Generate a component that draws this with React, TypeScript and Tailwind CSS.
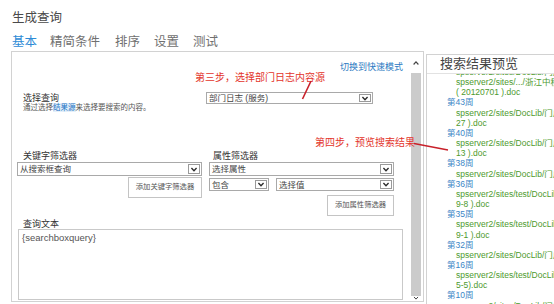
import React from "react";

const Chevron = ({ className }: { className?: string }) => (
  <svg viewBox="0 0 10 8" className={className}>
    <path d="M1.8 2.2 L5 5.6 L8.2 2.2" fill="none" stroke="#2b2b2b" strokeWidth="1.7" />
  </svg>
);

function Dropdown({ text, className }: { text: string; className: string }) {
  return (
    <div className={"flex items-stretch border border-[#a9a9a9] bg-white " + className}>
      <span className="flex-1 flex items-center pl-[2px] text-[8.5px] leading-[10px] text-[#444] whitespace-nowrap overflow-hidden">
        {text}
      </span>
      <span className="flex items-center justify-center w-[12px] my-[1px] mr-[1px] border border-[#9a9a9a]">
        <Chevron className="w-[8px] h-[7px]" />
      </span>
    </div>
  );
}

type Row = { t: string; k: "g" | "b" };

const rows: Row[] = [
  { t: "spserver2/sites/DocLib/门户部门日志", k: "g" },
  { t: "spserver2/sites/.../浙江中移动部门日志", k: "g" },
  { t: "( 20120701 ).doc", k: "g" },
  { t: "第43周", k: "b" },
  { t: "spserver2/sites/DocLib/门户部门日志", k: "g" },
  { t: "27 ).doc", k: "g" },
  { t: "第40周", k: "b" },
  { t: "spserver2/sites/DocLib/门户部门日志", k: "g" },
  { t: "13 ).doc", k: "g" },
  { t: "第38周", k: "b" },
  { t: "spserver2/sites/DocLib/门户部门日志", k: "g" },
  { t: "第36周", k: "b" },
  { t: "spserver2/sites/test/DocLib/部门日志", k: "g" },
  { t: "9-8 ).doc", k: "g" },
  { t: "第35周", k: "b" },
  { t: "spserver2/sites/test/DocLib/部门日志", k: "g" },
  { t: "9-1 ).doc", k: "g" },
  { t: "第32周", k: "b" },
  { t: "spserver2/sites/DocLib/门户部门日志", k: "g" },
  { t: "第16周", k: "b" },
  { t: "spserver2/sites/test/DocLib/部门日志", k: "g" },
  { t: "5-5).doc", k: "g" },
  { t: "第10周", k: "b" },
  { t: "spserver2/sites/DocLib/门户部门日志", k: "g" },
];

export default function App() {
  return (
    <div className="relative w-[554px] h-[304px] overflow-hidden bg-white font-['Liberation_Sans','Noto_Sans_CJK_SC',sans-serif]">
      {/* title */}
      <div className="pl-[12px] pt-[12px] text-[12.5px] leading-[13px] text-[#4a4a4a]">生成查询</div>
      {/* tabs */}
      <div className="flex pl-[12px] mt-[11px] text-[12.5px] leading-[13px] text-[#707070]">
        <span className="text-[#2e8bd6]">基本</span>
        <span className="ml-[13px]">精简条件</span>
        <span className="ml-[15px]">排序</span>
        <span className="ml-[14px]">设置</span>
        <span className="ml-[14px]">测试</span>
      </div>

      {/* main */}
      <div className="flex items-start mt-[2px]">
        {/* left panel */}
        <div className="ml-[11px] w-[413px] h-[251px] border border-[#d2d2d2] flex">
          <div className="flex-1 flex flex-col">
            <div className="pt-[10px] pr-[8px] text-right text-[9px] leading-[10px] text-[#2b79c2]">切换到快速模式</div>

            {/* select query */}
            <div className="flex items-start mt-[21px]">
              <div className="w-[194px] pl-[11px]">
                <div className="text-[9px] leading-[10px] text-[#333]">选择查询</div>
                <div className="text-[7.5px] leading-[9px] text-[#555] whitespace-nowrap">
                  通过选择<span className="text-[#1a72c4] bg-[#e3effa]">结果源</span>来选择要搜索的内容。
                </div>
              </div>
              <Dropdown text="部门日志 (服务)" className="-mt-px w-[167px] h-[12px]" />
            </div>

            {/* filters */}
            <div className="flex items-start mt-[39px] pl-[5px]">
              <div className="w-[185px] flex flex-col">
                <div className="pl-[6px] text-[9px] leading-[10px] text-[#333]">关键字筛选器</div>
                <Dropdown text="从搜索框查询" className="mt-[1px] w-[185px] h-[14px]" />
                <div className="flex justify-end mt-[1px]">
                  <div className="w-[74px] h-[21px] border border-[#c4c4c4] bg-white flex items-center justify-center text-[7.3px] text-[#555]">
                    添加关键字筛选器
                  </div>
                </div>
              </div>
              <div className="ml-[7px] w-[185px] flex flex-col">
                <div className="pl-[4px] text-[9px] leading-[10px] text-[#333]">属性筛选器</div>
                <Dropdown text="选择属性" className="mt-[1px] w-[185px] h-[14px]" />
                <div className="flex mt-[2px]">
                  <Dropdown text="包含" className="w-[60px] h-[13px]" />
                  <Dropdown text="选择值" className="ml-[7px] w-[118px] h-[13px]" />
                </div>
                <div className="flex justify-end mt-[4px]">
                  <div className="w-[67px] h-[21px] border border-[#c4c4c4] bg-white flex items-center justify-center text-[7.3px] text-[#555]">
                    添加属性筛选器
                  </div>
                </div>
              </div>
            </div>

            {/* query text */}
            <div className="mt-[4px] pl-[11px] text-[9px] leading-[9px] text-[#333]">查询文本</div>
            <div className="ml-[6px] w-[385px] h-[71px] border border-[#c9c9c9] pl-[3px] pt-[2px] text-[9.5px] leading-[12px] text-[#555]">
              {"{searchboxquery}"}
            </div>
          </div>

          {/* scrollbar */}
          <div className="w-[10px] mr-[2px] flex flex-col">
            <div className="h-[21px] flex items-center justify-center">
              <svg viewBox="0 0 10 8" className="w-[8px] h-[6px]">
                <path d="M1.8 6 L5 2.6 L8.2 6" fill="none" stroke="#444" strokeWidth="1.6" />
              </svg>
            </div>
            <div className="h-[223px] bg-[#cbcbcb]" />
            <div className="flex-1 flex items-end justify-center">
              <svg viewBox="0 0 10 8" className="w-[8px] h-[5px]">
                <path d="M1.8 1.5 L5 5 L8.2 1.5" fill="none" stroke="#444" strokeWidth="1.6" />
              </svg>
            </div>
          </div>
        </div>

        {/* right panel */}
        <div className="ml-[2px] mt-[3px] flex-1 h-[260px] border-l border-t border-[#d2d2d2] overflow-hidden">
          <div className="h-[19px] border-b border-[#e2e2e2] pl-[13px] text-[13px] leading-[18px] text-[#444] whitespace-nowrap">
            搜索结果预览
          </div>
          <div className="h-[240px] overflow-hidden">
            <div className="-mt-[7px]">
              {rows.map((r, i) =>
                r.k === "g" ? (
                  <div key={i} className="pl-[29px] text-[8.5px] leading-[10.15px] text-[#4d9a2e] whitespace-nowrap">
                    {r.t}
                  </div>
                ) : (
                  <div key={i} className="pl-[20px] text-[8.5px] leading-[10.15px] text-[#3a86c6] whitespace-nowrap">
                    {r.t}
                  </div>
                )
              )}
            </div>
          </div>
        </div>
      </div>

      {/* annotations */}
      <div className="absolute left-[195px] top-[72px] text-[10px] leading-[12px] text-[#e3342b] whitespace-nowrap">
        第三步，选择部门日志内容源
      </div>
      <div className="absolute left-[315px] top-[137px] text-[10px] leading-[12px] text-[#e3342b] whitespace-nowrap">
        第四步，预览搜索结果
      </div>
      <svg className="absolute left-0 top-0 pointer-events-none" width="554" height="304">
        <line x1="311" y1="81" x2="302.5" y2="99" stroke="#c8202a" strokeWidth="1.6" />
        <line x1="414" y1="143.5" x2="448" y2="150" stroke="#c8202a" strokeWidth="1.4" />
      </svg>
    </div>
  );
}
